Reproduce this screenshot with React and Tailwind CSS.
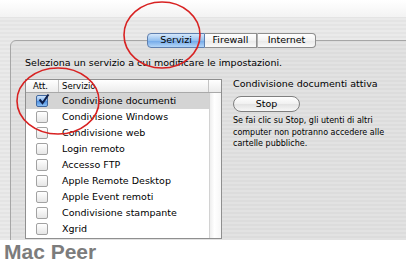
import React from 'react';

const services = [
  "Condivisione documenti",
  "Condivisione Windows",
  "Condivisione web",
  "Login remoto",
  "Accesso FTP",
  "Apple Remote Desktop",
  "Apple Event remoti",
  "Condivisione stampante",
  "Xgrid",
];

const Checkbox = ({ checked }) => {
  if (checked) {
    return (
      <span className="relative block w-[12px] h-[12px] rounded-[2px] border border-[#40679f] bg-[linear-gradient(#cfe3fa,#7fb1ec_50%,#4d8ee0_51%,#8cc0f4)]">
        <svg className="absolute -top-[3px] left-[0px]" width="13" height="13" viewBox="0 0 13 13">
          <path d="M2.5 6.5 L5.5 10 L11.5 1.5" fill="none" stroke="#0d1f4a" strokeWidth="2" />
        </svg>
      </span>
    );
  }
  return (
    <span className="block w-[12px] h-[12px] rounded-[2px] border border-[#a2a2a2] bg-[linear-gradient(#ffffff,#e6e6e6)]" />
  );
};

const Tab = ({ label, selected, className }) => (
  <div
    className={
      selected
        ? "flex items-center justify-center h-[15px] border border-[#5f7fae] bg-[linear-gradient(#d6e8fb,#94c0ef_50%,#6fa7e8_51%,#b4d6f8)] text-[9.5px] " + className
        : "flex items-center justify-center h-[15px] border border-[#8e8e8e] bg-[linear-gradient(#ffffff,#f2f2f2_50%,#e8e8e8_51%,#fafafa)] text-[9.5px] " + className
    }
  >
    {label}
  </div>
);

export default function App() {
  return (
    <div className="relative w-[406px] h-[263px] overflow-hidden bg-white text-black font-['DejaVu_Sans',sans-serif]">
      <div className="h-[17px] bg-[linear-gradient(#ffffff,#f3f3f3)]" />

      <div className="h-[223px] overflow-hidden pl-[10px] pt-[23px] bg-[repeating-linear-gradient(0deg,#eaeaea_0px,#eaeaea_2px,#e4e4e4_2px,#e4e4e4_4px)]">
        <div className="w-[420px] h-[240px] rounded-[6px] border border-[#a6a6a6] bg-black/[0.03]">
          {/* tabs */}
          <div className="flex -mt-[8px] ml-[136px]">
            <Tab label="Servizi" selected className="w-[58px] rounded-l-[4px]" />
            <Tab label="Firewall" className="w-[52px] border-l-0" />
            <Tab label="Internet" className="w-[59px] border-l-[#b0b0b0] rounded-r-[4px]" />
          </div>

          <div className="flex flex-col pl-[14px] mt-[7px]">
            <div className="h-[15px] leading-[15px] text-[9.5px]">
              Seleziona un servizio a cui modificare le impostazioni.
            </div>

            <div className="flex mt-[9px]">
              {/* service list */}
              <div className="w-[197px] h-[160px] overflow-hidden border border-[#8f8f8f] bg-white flex flex-col">
                <div className="flex h-[13px] border-b border-[#a9a9a9] bg-[linear-gradient(#ffffff,#ececec)] text-[8.5px] leading-[12px]">
                  <div className="w-[33px] border-r border-[#c4c4c4] pl-[7px]">Att.</div>
                  <div className="flex-1 border-r border-[#c4c4c4] pl-[3px]">Servizio</div>
                  <div className="w-[12px]" />
                </div>
                <div className="flex flex-1">
                  <div className="flex-1 flex flex-col">
                    {services.map((s, i) => (
                      <div key={s} className={i === 0 ? "flex items-center h-[16px] bg-[#d4d4d4]" : "flex items-center h-[16px]"}>
                        <div className="w-[33px] pl-[10px]">
                          <Checkbox checked={i === 0} />
                        </div>
                        <div className="pl-[3px] text-[9.5px]">{s}</div>
                      </div>
                    ))}
                  </div>
                  <div className="w-[12px] border-l border-[#d2d2d2] bg-[linear-gradient(90deg,#eeeeee,#ffffff_40%,#f6f6f6)]" />
                </div>
              </div>

              {/* status */}
              <div className="ml-[11px] -mt-[2px] flex flex-col items-start">
                <div className="h-[14px] leading-[14px] text-[9.5px]">Condivisione documenti attiva</div>
                <button className="mt-[5px] w-[67px] h-[16px] rounded-full border border-[#7f7f7f] bg-[linear-gradient(#ffffff,#f0f0f0_50%,#e2e2e2_51%,#f7f7f7)] text-[9.5px] leading-[14px]">
                  Stop
                </button>
                <div className="mt-[3px] w-[160px] text-[8px] leading-[11.5px]">
                  Se fai clic su Stop, gli utenti di altri computer non potranno accedere alle cartelle pubbliche.
                </div>
              </div>
            </div>
          </div>
        </div>
      </div>

      <div className="h-[23px] pl-[4px] leading-[23px] text-[21px] font-bold text-[#7c7c7c] font-['Liberation_Sans',sans-serif]">
        Mac Peer
      </div>

      {/* red annotation circles */}
      <svg className="absolute inset-0 pointer-events-none" width="406" height="263" viewBox="0 0 406 263">
        <ellipse cx="162" cy="35" rx="38" ry="33" fill="none" stroke="#d82222" strokeWidth="1.6" />
        <ellipse cx="58" cy="101" rx="41" ry="33" fill="none" stroke="#d82222" strokeWidth="1.6" />
      </svg>
    </div>
  );
}
